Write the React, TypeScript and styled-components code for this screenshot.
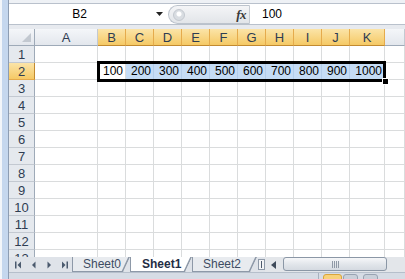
import React from "react";
import styled, { createGlobalStyle, css } from "styled-components";

const GlobalStyle = createGlobalStyle`
  html, body {
    margin: 0;
    padding: 0;
    background: #fff;
  }
  body {
    font-family: "Liberation Sans", Arial, sans-serif;
    font-size: 12px;
  }
`;

const COLS = ["A", "B", "C", "D", "E", "F", "G", "H", "I", "J", "K"];
const COL_WIDTHS = [63, 28, 28, 28, 28, 28, 28, 28, 28, 28, 35];
const ROWS = [1, 2, 3, 4, 5, 6, 7, 8, 9, 10, 11, 12, 13];
const CORNER_W = 26;
const ROW_H = 17;
const SELECTED_ROW = 2;

// x where a column starts inside the sheet
const colStart = (i: number) =>
  CORNER_W + COL_WIDTHS.slice(0, i).reduce((a, b) => a + b, 0);

const HEADER_TEXT = "#2f3d52";
const GRID = "#dadcdd";
const HEAD_LINE = "#c3c9d1";
const TAB_LINE = "#8e99a8";

const Window = styled.div`
  width: 405px;
  height: 279px;
  display: flex;
  overflow: hidden;
`;

const Frame = styled.div`
  width: 9px;
  flex: none;
  box-sizing: border-box;
  border-right: 1px solid #8d9db3;
  background: linear-gradient(90deg, #f3f6fa 0 2px, #c5d7ee 2px);
`;

const Main = styled.div`
  flex: 1;
  min-width: 0;
  display: flex;
  flex-direction: column;
`;

const TopStrip = styled.div`
  height: 3px;
  background: #eef1f5;
`;

const FormulaBar = styled.div`
  height: 22px;
  box-sizing: border-box;
  display: flex;
  background: #fff;
  border-top: 1px solid #b9c1cc;
  border-bottom: 1px solid #b9c1cc;
`;

const NameBox = styled.div`
  width: 159px;
  display: flex;
  align-items: center;
`;

const NameText = styled.div`
  flex: 1;
  text-align: center;
  color: #000;
  font-size: 12px;
`;

const DropArrow = styled.div`
  width: 18px;
  display: flex;
  justify-content: center;
  align-items: center;
`;

const Pill = styled.div`
  width: 82px;
  box-sizing: border-box;
  display: flex;
  align-items: center;
  justify-content: space-between;
  padding: 0 3px 0 4px;
  margin: 1px 0 0;
  border: 1px solid #bcc3cc;
  border-right-color: #c5cbd3;
  border-radius: 10px 0 0 10px;
  background: linear-gradient(180deg, #f4f5f7 0%, #e2e5e9 100%);
`;

const Knob = styled.div`
  width: 12px;
  height: 12px;
  border-radius: 50%;
  box-sizing: border-box;
  border: 1px solid #c3c8cf;
  background: radial-gradient(circle at 50% 40%, #ffffff 0 2px, #d9dde2 3px);
`;

const Fx = styled.span`
  font-family: "Liberation Serif", "Times New Roman", serif;
  font-style: italic;
  font-weight: bold;
  font-size: 13px;
  color: #3a3a3a;
  letter-spacing: -0.5px;
`;

const FormulaInput = styled.div`
  flex: 1;
  display: flex;
  align-items: center;
  padding-left: 12px;
  font-size: 12px;
  color: #000;
`;

const Gap = styled.div`
  height: 4px;
  background: #e7eaef;
`;

const Sheet = styled.div<{ $cols: string }>`
  position: relative;
  height: 228px;
  overflow: hidden;
  display: grid;
  grid-template-columns: ${(p) => p.$cols};
  grid-auto-rows: ${ROW_H}px;
  background: #fff;
`;

const headerBase = css`
  box-sizing: border-box;
  display: flex;
  align-items: center;
  justify-content: center;
  font-size: 13px;
  color: ${HEADER_TEXT};
`;

const Corner = styled.div`
  ${headerBase};
  position: relative;
  background: linear-gradient(180deg, #f4f6f9 0%, #e3e7ed 100%);
  border-right: 1px solid #9eaab8;
  border-bottom: 1px solid #9eaab8;
`;

const CornerTriangle = styled.div`
  position: absolute;
  right: 3px;
  bottom: 3px;
  width: 0;
  height: 0;
  border-left: 9px solid transparent;
  border-bottom: 9px solid #c2c8d0;
`;

const ColHeader = styled.div<{ $selected?: boolean }>`
  ${headerBase};
  background: linear-gradient(180deg, #f4f6f9 0%, #e3e7ed 100%);
  border-right: 1px solid ${HEAD_LINE};
  border-bottom: 1px solid #9eaab8;
  ${(p) =>
    p.$selected &&
    css`
      background: linear-gradient(180deg, #fbe4a8 0%, #f5c965 100%);
      border-right-color: #e5ab4c;
      border-bottom-color: #c28a30;
    `}
`;

const RowHeader = styled.div<{ $selected?: boolean }>`
  ${headerBase};
  background: #e5e9ee;
  border-right: 1px solid #9eaab8;
  border-bottom: 1px solid ${HEAD_LINE};
  ${(p) =>
    p.$selected &&
    css`
      background: linear-gradient(180deg, #fbe4a8 0%, #f5c965 100%);
      border-bottom-color: #e5ab4c;
      border-right-color: #c28a30;
    `}
`;

type Tone = "plain" | "active" | "range";

const Cell = styled.div<{ $tone: Tone }>`
  box-sizing: border-box;
  display: flex;
  align-items: center;
  justify-content: flex-end;
  padding-right: 2px;
  font-size: 12px;
  color: #000;
  border-right: 1px solid ${GRID};
  border-bottom: 1px solid ${GRID};
  background: ${(p) => (p.$tone === "range" ? "#c5dcf5" : "#fff")};
  ${(p) =>
    p.$tone === "range" &&
    css`
      border-color: #b3cdea;
    `}
`;

const Selection = styled.div<{ $left: number; $top: number; $w: number; $h: number }>`
  position: absolute;
  left: ${(p) => p.$left}px;
  top: ${(p) => p.$top}px;
  width: ${(p) => p.$w}px;
  height: ${(p) => p.$h}px;
  box-sizing: border-box;
  border: 3px solid #000;
  pointer-events: none;
`;

const FillHandle = styled.div`
  position: absolute;
  right: -5px;
  bottom: -5px;
  width: 5px;
  height: 5px;
  background: #000;
  box-shadow: 0 0 0 1px #fff;
`;

const TabBar = styled.div`
  height: 15px;
  display: flex;
  background: #dfe3e9;
`;

const Nav = styled.div`
  width: 63px;
  display: flex;
  align-items: center;
  justify-content: space-around;
  padding-left: 2px;
  box-sizing: border-box;
`;

const NavBtn = styled.div`
  display: flex;
  align-items: center;
  justify-content: center;
  width: 13px;
`;

const Tab = styled.div<{ $active?: boolean; $w: number; $pad: number }>`
  position: relative;
  width: ${(p) => p.$w}px;
  flex: none;
  box-sizing: border-box;
  display: flex;
  align-items: center;
  padding-left: ${(p) => p.$pad}px;
  font-size: 12px;
  color: ${(p) => (p.$active ? "#1f2d44" : "#3d4c63")};
  font-weight: ${(p) => (p.$active ? "bold" : "normal")};
  background: ${(p) => (p.$active ? "#fff" : "#e8ebef")};
  border-left: 1px solid ${TAB_LINE};
  border-bottom: 1px solid ${TAB_LINE};
  clip-path: polygon(0 0, 100% 0, calc(100% - 7px) 100%, 0 100%);

  &::after {
    content: "";
    position: absolute;
    top: -1px;
    bottom: -1px;
    left: calc(100% - 5px);
    width: 1.5px;
    background: ${TAB_LINE};
    transform: skewX(-25deg);
  }
`;

const SplitBox = styled.div`
  width: 7px;
  margin: 2px 0 2px 1px;
  box-sizing: border-box;
  border: 1px solid ${TAB_LINE};
  background: #f3f4f6;
  display: flex;
  justify-content: center;

  &::before {
    content: "";
    width: 1px;
    margin: 1px 0;
    background: #4d5a6c;
  }
`;

const HScroll = styled.div`
  flex: 1;
  display: flex;
  align-items: stretch;
  background: #e3e6ea;
`;

const ScrollArrow = styled.div`
  width: 16px;
  display: flex;
  align-items: center;
  justify-content: center;
`;

const Thumb = styled.div`
  width: 104px;
  margin: 0 0 1px 2px;
  box-sizing: border-box;
  border: 1px solid #8b97a6;
  border-radius: 3px;
  background: linear-gradient(180deg, #f6f7f9 0%, #e1e5ea 55%, #d5dae1 100%);
  display: flex;
  align-items: center;
  justify-content: center;
  gap: 1px;
`;

const Grip = styled.div`
  width: 1px;
  height: 7px;
  background: #8f99a6;
`;

const StatusBar = styled.div`
  height: 7px;
  display: flex;
  justify-content: flex-end;
  align-items: flex-start;
  padding-right: 27px;
  background: #d6dce5;
  border-top: 1px solid #b6bfcb;
  box-sizing: border-box;
`;

const StatusDivider = styled.div`
  width: 1px;
  height: 100%;
  background: #a7b1be;
  margin-right: 4px;
`;

const ViewBtn = styled.div<{ $on?: boolean; $w: number; $gap: number }>`
  width: ${(p) => p.$w}px;
  height: 10px;
  margin: 1px ${(p) => p.$gap}px 0 0;
  box-sizing: border-box;
  border-radius: 3px 3px 0 0;
  border: 1px solid ${(p) => (p.$on ? "#d9a53c" : "#98a3b2")};
  background: ${(p) => (p.$on ? "#f8d27a" : "#c9d0da")};
`;

const Tri = ({ dir, bar }: { dir: "left" | "right"; bar?: boolean }) => (
  <svg width="7" height="8" viewBox="0 0 7 8">
    {dir === "left" ? (
      <>
        {bar && <rect x="0" y="0.5" width="1.5" height="7" fill="#4b5a6e" />}
        <polygon points={bar ? "6,0.5 2.5,4 6,7.5" : "5.5,0.5 2,4 5.5,7.5"} fill="#4b5a6e" />
      </>
    ) : (
      <>
        <polygon points={bar ? "1,0.5 4.5,4 1,7.5" : "1.5,0.5 5,4 1.5,7.5"} fill="#4b5a6e" />
        {bar && <rect x="5.5" y="0.5" width="1.5" height="7" fill="#4b5a6e" />}
      </>
    )}
  </svg>
);

export default function App() {
  const cols = `${CORNER_W}px ${COL_WIDTHS.map((w) => `${w}px`).join(" ")} 1fr`;

  // selection B2:K2, border straddles the grid lines
  const selLeft = colStart(1) - 1;
  const selRight = colStart(COLS.length) + 1;
  const selTop = ROW_H * SELECTED_ROW - 2;
  const selBottom = ROW_H * (SELECTED_ROW + 1) + 2;

  return (
    <>
      <GlobalStyle />
      <Window>
        <Frame />
        <Main>
          <TopStrip />
          <FormulaBar>
            <NameBox>
              <NameText>B2</NameText>
              <DropArrow>
                <svg width="7" height="4" viewBox="0 0 7 4">
                  <polygon points="0,0 7,0 3.5,4" fill="#222" />
                </svg>
              </DropArrow>
            </NameBox>
            <Pill>
              <Knob />
              <Fx>fx</Fx>
            </Pill>
            <FormulaInput>100</FormulaInput>
          </FormulaBar>
          <Gap />
          <Sheet $cols={cols}>
            <Corner>
              <CornerTriangle />
            </Corner>
            {COLS.map((c, i) => (
              <ColHeader key={c} $selected={i > 0}>
                {c}
              </ColHeader>
            ))}
            <ColHeader />
            {ROWS.map((r) => (
              <React.Fragment key={r}>
                <RowHeader $selected={r === SELECTED_ROW}>{r}</RowHeader>
                {COLS.map((c, i) => {
                  const inSel = r === SELECTED_ROW && i > 0;
                  const tone: Tone = inSel ? (i === 1 ? "active" : "range") : "plain";
                  return (
                    <Cell key={c} $tone={tone}>
                      {inSel ? String(i * 100) : ""}
                    </Cell>
                  );
                })}
                <Cell $tone="plain" />
              </React.Fragment>
            ))}
            <Selection
              $left={selLeft}
              $top={selTop}
              $w={selRight - selLeft}
              $h={selBottom - selTop}
            >
              <FillHandle />
            </Selection>
          </Sheet>
          <TabBar>
            <Nav>
              <NavBtn>
                <Tri dir="left" bar />
              </NavBtn>
              <NavBtn>
                <Tri dir="left" />
              </NavBtn>
              <NavBtn>
                <Tri dir="right" />
              </NavBtn>
              <NavBtn>
                <Tri dir="right" bar />
              </NavBtn>
            </Nav>
            <Tab $w={58} $pad={10}>Sheet0</Tab>
            <Tab $w={62} $pad={11} $active>
              Sheet1
            </Tab>
            <Tab $w={65} $pad={10}>Sheet2</Tab>
            <SplitBox />
            <HScroll>
              <ScrollArrow>
                <svg width="5" height="8" viewBox="0 0 5 8">
                  <polygon points="5,0 0,4 5,8" fill="#3e4a5a" />
                </svg>
              </ScrollArrow>
              <Thumb>
                <Grip />
                <Grip />
                <Grip />
                <Grip />
              </Thumb>
            </HScroll>
          </TabBar>
          <StatusBar>
            <StatusDivider />
            <ViewBtn $on $w={19} $gap={1} />
            <ViewBtn $w={15} $gap={5} />
            <ViewBtn $w={15} $gap={0} />
          </StatusBar>
        </Main>
      </Window>
    </>
  );
}
